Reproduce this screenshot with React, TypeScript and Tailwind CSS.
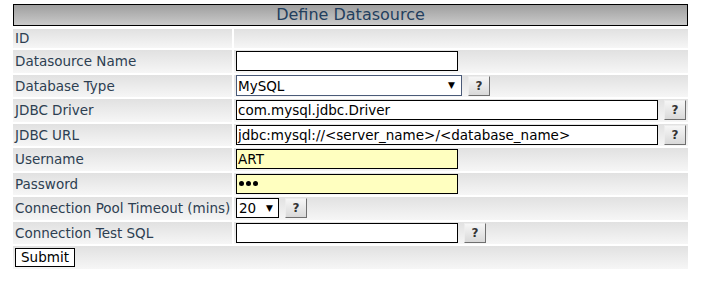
const font = { fontFamily: '"DejaVu Sans", Verdana, sans-serif' }

const Help = ({ ml = "ml-[6px]" }: { ml?: string }) => (
    <button
        className={`${ml} h-[20px] w-[22px] shrink-0 border border-t-[#ececec] border-l-[#ececec] border-r-[#6f6f6f] border-b-[#6f6f6f] bg-linear-to-b from-[#f6f6f6] to-[#d9d9d9] text-[12px] font-bold leading-none text-[#333]`}
    >
        ?
    </button>
)

const Row = ({ label, h = "h-[22.5px]", children }: { label: string; h?: string; children?: React.ReactNode }) => (
    <>
        <div className={`${h} flex items-center pl-[2px] bg-linear-to-b from-[#e1e1e1] to-[#f6f6f6] text-[13.5px] text-[#2d3f52]`}>
            {label}
        </div>
        <div className={`${h} flex items-center pl-[2px] bg-linear-to-b from-[#e1e1e1] to-[#f6f6f6]`}>
            {children}
        </div>
    </>
)

const Input = ({ w = "w-[222px]", value = "", yellow = false }: { w?: string; value?: string; yellow?: boolean }) => (
    <div className={`${w} h-[20px] border border-black ${yellow ? "bg-[#ffffc0]" : "bg-white"} flex items-center pl-[1px] text-[13.5px] text-black overflow-hidden whitespace-nowrap`}>
        {value}
    </div>
)

const App = () => {
    return (
        <div className="w-[710px] h-[282px] bg-white pl-[13px] pt-[4px]" style={font}>
            <div className="w-[675px] h-[22px] border border-black bg-linear-to-b from-[#9f9f9f] to-[#cacaca] flex items-center justify-center text-[16px] text-[#233f5e]">
                Define Datasource
            </div>
            <div className="mt-[3px] w-[675px] grid grid-cols-[219px_454px] gap-[2px]">
                <Row label="ID" h="h-[19px]" />
                <Row label="Datasource Name">
                    <Input />
                </Row>
                <Row label="Database Type">
                    <div className="w-[226px] h-[21px] border border-[#4a5a78] bg-white flex items-center justify-between pl-[1px] pr-[6px] text-[13.5px] text-black">
                        <span>MySQL</span>
                        <span className="text-[9px]">▼</span>
                    </div>
                    <Help />
                </Row>
                <Row label="JDBC Driver">
                    <Input w="w-[422px]" value="com.mysql.jdbc.Driver" />
                    <Help />
                </Row>
                <Row label="JDBC URL">
                    <Input w="w-[422px]" value="jdbc:mysql://<server_name>/<database_name>" />
                    <Help />
                </Row>
                <Row label="Username">
                    <Input yellow value="ART" />
                </Row>
                <Row label="Password">
                    <div className="w-[222px] h-[20px] border border-black bg-[#ffffc0] flex items-center gap-[2px] pl-[2px]">
                        <span className="w-[5px] h-[5px] rounded-full bg-black" />
                        <span className="w-[5px] h-[5px] rounded-full bg-black" />
                        <span className="w-[5px] h-[5px] rounded-full bg-black" />
                    </div>
                </Row>
                <Row label="Connection Pool Timeout (mins)">
                    <div className="w-[43px] h-[20px] border border-black bg-white flex items-center justify-between pl-[2px] pr-[5px] text-[13.5px] text-black">
                        <span>20</span>
                        <span className="text-[9px]">▼</span>
                    </div>
                    <Help />
                </Row>
                <Row label="Connection Test SQL">
                    <Input />
                    <Help />
                </Row>
                <div className="col-span-2 h-[22.5px] flex items-center pl-[2px] bg-linear-to-b from-[#e1e1e1] to-[#f6f6f6]">
                    <button className="h-[19px] w-[60px] border border-black bg-white text-[13.5px] text-black leading-none">
                        Submit
                    </button>
                </div>
            </div>
        </div>
    )
}

export default App
